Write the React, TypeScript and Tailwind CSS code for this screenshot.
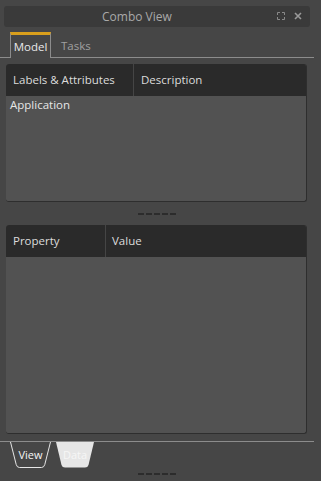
import React from "react";

const font = { fontFamily: '"Open Sans", "Noto Sans", sans-serif' };

function Dashes() {
  return (
    <div className="flex gap-[2px]">
      <div className="w-[6px] h-[2px] bg-[#2c2c2c]" />
      <div className="w-[6px] h-[2px] bg-[#2c2c2c]" />
      <div className="w-[6px] h-[2px] bg-[#2c2c2c]" />
      <div className="w-[6px] h-[2px] bg-[#2c2c2c]" />
      <div className="w-[6px] h-[2px] bg-[#2c2c2c]" />
    </div>
  );
}

export default function App() {
  return (
    <div
      className="w-[321px] h-[481px] bg-[#464646] flex flex-col overflow-hidden text-[11.5px]"
      style={font}
    >
      {/* title bar */}
      <div className="mt-[6px] ml-[4px] w-[306px] h-[21px] rounded-[3px] bg-[#3a3a3a] relative flex items-center pl-[98px]">
        <span className="text-[12px] text-[#a9a9a9] leading-none">Combo View</span>
        <svg className="absolute left-[273px] top-[6px]" width="8" height="8" viewBox="0 0 8 8" fill="none" stroke="#8a8a8a" strokeWidth="1">
          <path d="M0.5 3V0.5H3M5 0.5H7.5V3M7.5 5V7.5H5M3 7.5H0.5V5" />
        </svg>
        <svg className="absolute left-[290px] top-[6px]" width="8" height="8" viewBox="0 0 8 8" fill="none" stroke="#9a9a9a" strokeWidth="1.6">
          <path d="M1 1L7 7M7 1L1 7" />
        </svg>
      </div>

      {/* top tabs */}
      <div className="mt-[4px] w-[314px] h-[27px] border-b border-[#8c8c8c] flex items-end pl-[10px]">
        <div className="w-[41px] h-[26px] border-t-[3px] border-t-[#d99f1c] border-x border-x-[#8c8c8c] flex items-center justify-center -mb-px bg-[#464646]">
          <span className="text-[#e8e8e8] leading-none">Model</span>
        </div>
        <div className="h-[26px] flex items-center pl-[10px]">
          <span className="text-[#a0a0a0] leading-none pt-[3px]">Tasks</span>
        </div>
      </div>

      {/* panel 1 */}
      <div className="mt-[6px] ml-[6px] w-[301px] h-[138px] rounded-[3px] bg-[#525252] border-r border-b border-[#2e2e2e] overflow-hidden flex flex-col">
        <div className="h-[32px] bg-[#2a2a2a] flex shrink-0">
          <div className="w-[128px] border-r border-[#454545] flex items-center pl-[7px] text-[#dcdcdc]">
            Labels &amp; Attributes
          </div>
          <div className="flex items-center pl-[7px] text-[#dcdcdc]">Description</div>
        </div>
        <div className="pl-[4px] text-[#e6e6e6]">Application</div>
      </div>

      {/* splitter */}
      <div className="h-[23px] flex items-start justify-center pt-[11px] pr-[8px]">
        <Dashes />
      </div>

      {/* panel 2 */}
      <div className="ml-[6px] w-[301px] h-[209px] rounded-[3px] bg-[#525252] border-r border-b border-[#2e2e2e] overflow-hidden flex flex-col">
        <div className="h-[32px] bg-[#2a2a2a] flex shrink-0">
          <div className="w-[100px] border-r border-[#454545] flex items-center pl-[7px] text-[#dcdcdc]">
            Property
          </div>
          <div className="flex items-center pl-[6px] text-[#dcdcdc]">Value</div>
        </div>
      </div>

      {/* bottom tabs */}
      <div className="mt-[7px] w-[314px] border-t border-[#8c8c8c] flex pl-[10px] gap-[5px]">
        <div className="relative w-[41px] h-[26px] flex items-center justify-center">
          <svg className="absolute inset-0" width="41" height="26" viewBox="0 0 41 26" fill="none">
            <path d="M0.5 0L6.2 22.5Q7 25.5 9.5 25.5H31.5Q34 25.5 34.8 22.5L40.5 0" stroke="#e6e6e6" strokeWidth="1" />
          </svg>
          <span className="relative text-[#f4f4f4] leading-none -mt-[1px] text-[11px]">View</span>
        </div>
        <div className="relative w-[38px] h-[26px] flex items-center justify-center">
          <svg className="absolute inset-0" width="38" height="26" viewBox="0 0 38 26">
            <path d="M0 0L5.5 23Q6.3 25.5 9 25.5H29Q31.7 25.5 32.5 23L38 0Z" fill="#e6e6e6" />
          </svg>
          <span className="relative text-[#f6f6f6] leading-none -mt-[1px] text-[11px]">Data</span>
        </div>
      </div>

      <div className="mt-[5px] flex justify-center pr-[8px]">
        <Dashes />
      </div>
    </div>
  );
}
